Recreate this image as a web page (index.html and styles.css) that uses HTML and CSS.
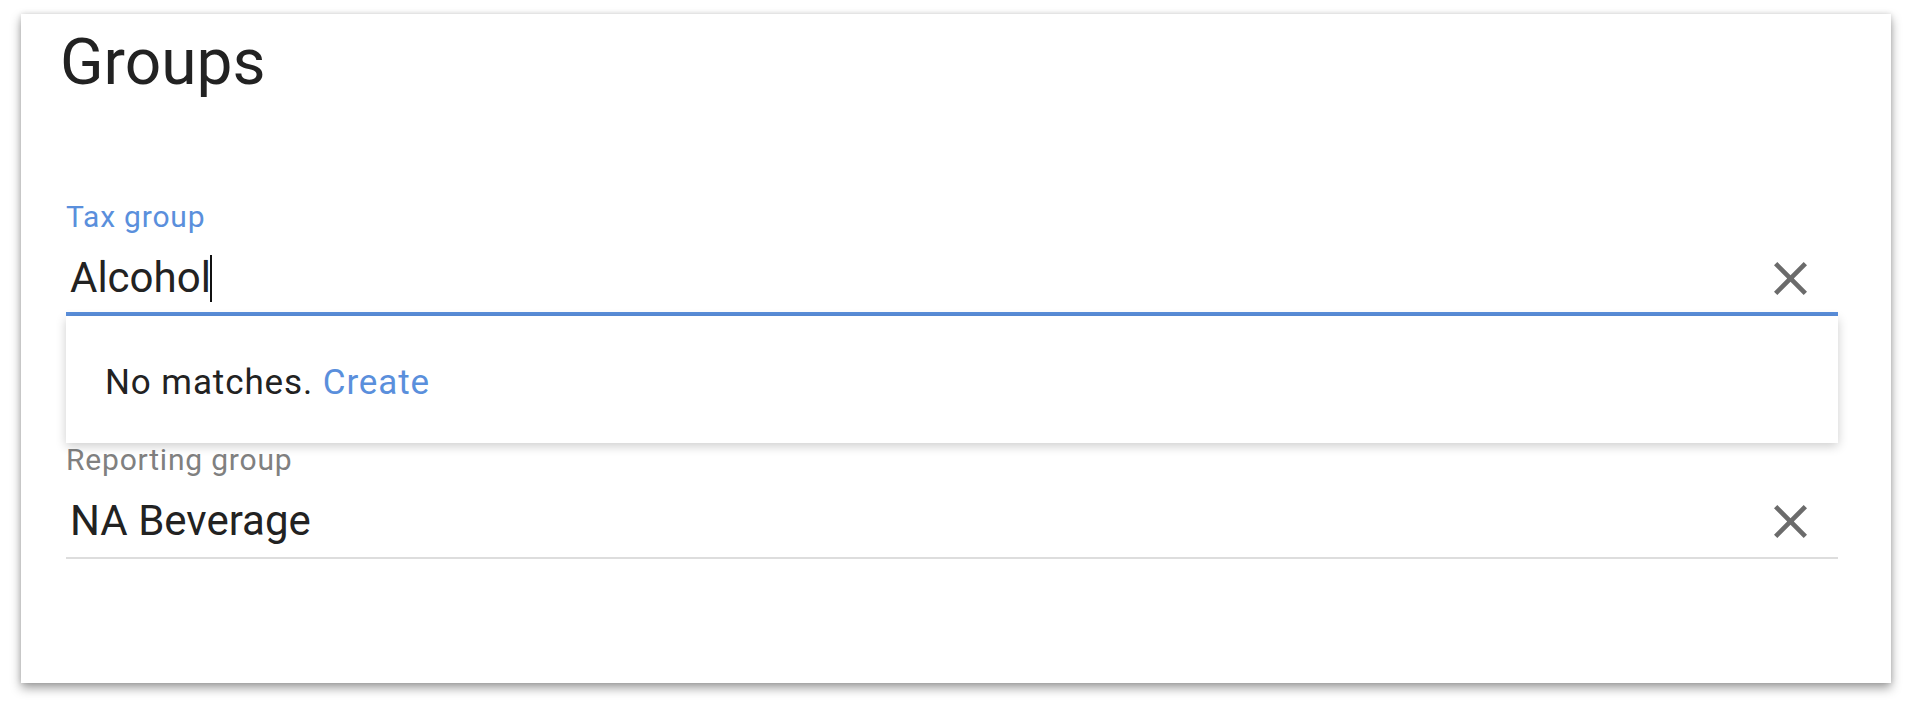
FILE: index.html
```html
<!DOCTYPE html>
<html>
<head>
<meta charset="utf-8">
<link rel="stylesheet" href="styles.css">
</head>
<body>
<section class="card">
  <h1 class="title">Groups</h1>
  <div class="field field-focused">
    <div class="label label-active">Tax group</div>
    <div class="input-row input-row-active">
      <div class="value">Alcohol<span class="caret"></span></div>
      <svg class="clear" viewBox="5 5 14 14" width="33" height="33"><path d="M19 6.41L17.59 5 12 10.59 6.41 5 5 6.41 10.59 12 5 17.59 6.41 19 12 13.41 17.59 19 19 17.59 13.41 12z"/></svg>
    </div>
    <div class="menu">
      <span class="menu-text">No matches.</span> <span class="menu-link">Create</span>
    </div>
  </div>
  <div class="field">
    <div class="label">Reporting group</div>
    <div class="input-row">
      <div class="value">NA Beverage</div>
      <svg class="clear" viewBox="5 5 14 14" width="33" height="33"><path d="M19 6.41L17.59 5 12 10.59 6.41 5 5 6.41 10.59 12 5 17.59 6.41 19 12 13.41 17.59 19 19 17.59 13.41 12z"/></svg>
    </div>
  </div>
</section>
</body>
</html>
```
FILE: styles.css
```css
html, body {
  margin: 0;
  padding: 0;
  background: #ffffff;
}
body {
  font-family: Roboto, "Liberation Sans", sans-serif;
  color: #212121;
  padding: 14px 23px 27px 21px;
}
.card {
  background: #ffffff;
  box-shadow: 0 5px 10px rgba(0, 0, 0, 0.38), 0 0 5px rgba(0, 0, 0, 0.12);
  padding: 12px 53px 100px 45px;
  height: 669px;
  box-sizing: border-box;
}
.title {
  margin: 0 0 98.7px -6px;
  font-size: 64px;
  line-height: 74px;
  font-weight: 400;
  color: #222222;
}
.field {
  position: relative;
  margin-bottom: 125.4px;
}
.field:last-child {
  margin-bottom: 0;
}
.label {
  font-size: 30px;
  line-height: 36px;
  letter-spacing: 0.8px;
  color: #808080;
  margin-bottom: 18.6px;
}
.label-active {
  color: #5a8fdc;
}
.input-row {
  display: flex;
  align-items: center;
  height: 50px;
  padding-bottom: 11px;
  border-bottom: 2px solid #dddddd;
}
.input-row-active {
  padding-bottom: 9px;
  border-bottom: 4px solid #5a8fdc;
}
.value {
  flex: 1;
  font-size: 42px;
  line-height: 50px;
  color: #222222;
  padding-left: 4px;
  display: flex;
  align-items: center;
}
.caret {
  display: inline-block;
  width: 2px;
  height: 47px;
  background: #111111;
  margin-left: -1px;
}
.clear {
  fill: #6b6b6b;
  margin-right: 31px;
  flex: none;
}
.menu {
  position: absolute;
  left: 0;
  right: 0;
  top: 100%;
  height: 127px;
  box-sizing: border-box;
  padding: 46px 39px 0;
  background: #ffffff;
  box-shadow: 0 3px 10px rgba(0, 0, 0, 0.2);
  font-size: 35px;
  line-height: 42px;
  letter-spacing: 0.9px;
  z-index: 2;
}
.menu-text {
  color: #222222;
}
.menu-link {
  color: #5a8fdc;
}
```
